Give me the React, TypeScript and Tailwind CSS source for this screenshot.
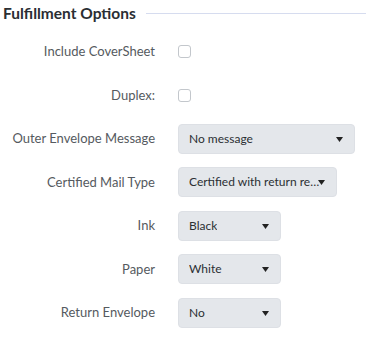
import React from "react";

const Arrow = () => (
  <svg width="7" height="5" viewBox="0 0 7 5" className="absolute right-[11px] top-[12px]">
    <path d="M0 0 L7 0 L3.5 5 Z" fill="#222" />
  </svg>
);

function Select({ value, width }: { value: string; width: string }) {
  return (
    <div
      className={`${width} relative h-[30px] flex items-center pl-[10px] pr-[13px] rounded-[4px] bg-[#e4e7eb] border border-[#dde0e5] text-[12px] text-[#2b2f33]`}
    >
      <span className="truncate">{value}</span>
      <Arrow />
    </div>
  );
}

function Check() {
  return <div className="w-[13px] h-[13px] rounded-[3px] border border-[#c3c7cc] bg-white" />;
}

function Row({ label, children }: { label: string; children: React.ReactNode }) {
  return (
    <div className="flex items-center h-[43.5px]">
      <div className="w-[155px] text-right text-[13px] text-[#555a60]">{label}</div>
      <div className="ml-[23px]">{children}</div>
    </div>
  );
}

export default function App() {
  return (
    <div className="w-[382px] h-[342px] bg-white" style={{ fontFamily: "'Lato', 'Open Sans', sans-serif" }}>
      <div className="flex items-center h-[26px] pl-[3px] pt-[1px]">
        <div className="text-[15.5px] font-bold text-[#2a2e33] whitespace-nowrap">Fulfillment Options</div>
        <div className="ml-[10px] flex-1 mr-[16px] h-px bg-[#d6dcef]" />
      </div>
      <div className="pt-[4px]">
        <Row label="Include CoverSheet"><Check /></Row>
        <Row label="Duplex:"><Check /></Row>
        <Row label="Outer Envelope Message"><Select value="No message" width="w-[177px]" /></Row>
        <Row label="Certified Mail Type"><Select value="Certified with return receipt" width="w-[159px]" /></Row>
        <Row label="Ink"><Select value="Black" width="w-[103px]" /></Row>
        <Row label="Paper"><Select value="White" width="w-[103px]" /></Row>
        <Row label="Return Envelope"><Select value="No" width="w-[103px]" /></Row>
      </div>
    </div>
  );
}
